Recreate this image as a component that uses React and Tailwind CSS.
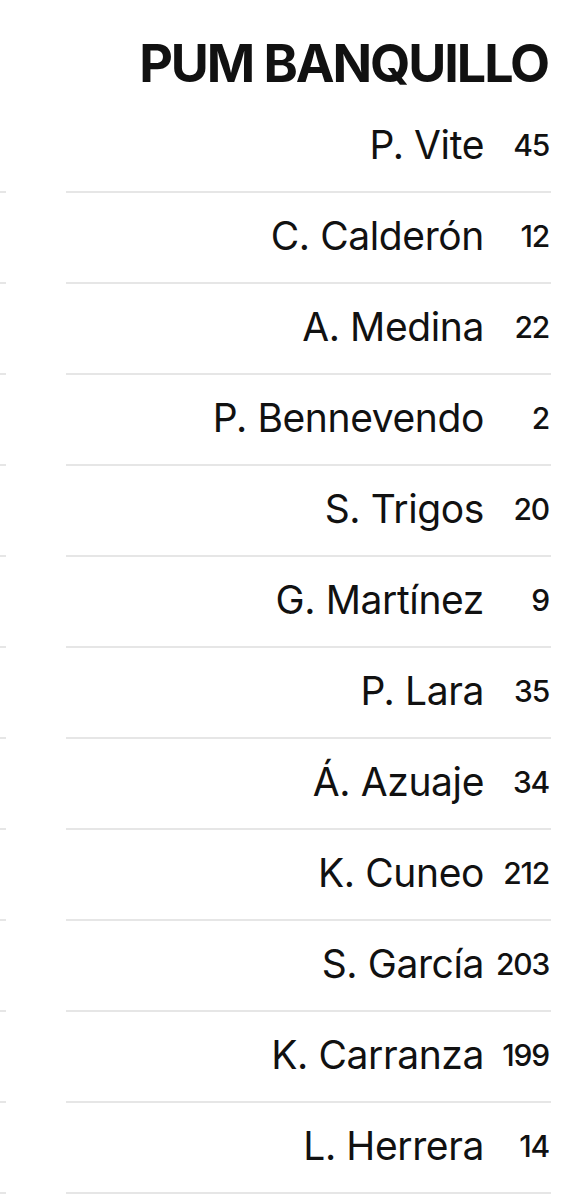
const players = [
  { name: "P. Vite", num: "45" },
  { name: "C. Calderón", num: "12" },
  { name: "A. Medina", num: "22" },
  { name: "P. Bennevendo", num: "2" },
  { name: "S. Trigos", num: "20" },
  { name: "G. Martínez", num: "9" },
  { name: "P. Lara", num: "35" },
  { name: "Á. Azuaje", num: "34" },
  { name: "K. Cuneo", num: "212" },
  { name: "S. García", num: "203" },
  { name: "K. Carranza", num: "199" },
  { name: "L. Herrera", num: "14" },
]

export default function App() {
  return (
    <div className="w-[566px] h-[1200px] overflow-hidden bg-white text-[#111111] font-['Inter',sans-serif]">
      {/* Title */}
      <div className="h-[102px] flex justify-end pr-[18px] pt-[34px]">
        <h2 className="text-[52px] leading-[60px] font-bold tracking-[-0.04em]">PUM BANQUILLO</h2>
      </div>

      <div className="flex">
        {/* cut-off neighbour column */}
        <div className="w-[6px] flex flex-col">
          {players.map((p) => (
            <div key={p.name} className="h-[91px] border-b-2 border-[#e6e6e6]" />
          ))}
        </div>

        <div className="ml-[60px] w-[485px] flex flex-col">
          {players.map((p) => (
            <div
              key={p.name}
              className="h-[91px] border-b-2 border-[#e6e6e6] flex items-center pb-[2px]"
            >
              <span className="flex-1 text-right text-[39px] tracking-[-0.01em]">{p.name}</span>
              <span className="w-[67px] pr-[2px] text-right text-[30px] font-medium tracking-[-0.04em]">{p.num}</span>
            </div>
          ))}
        </div>
      </div>
    </div>
  )
}
